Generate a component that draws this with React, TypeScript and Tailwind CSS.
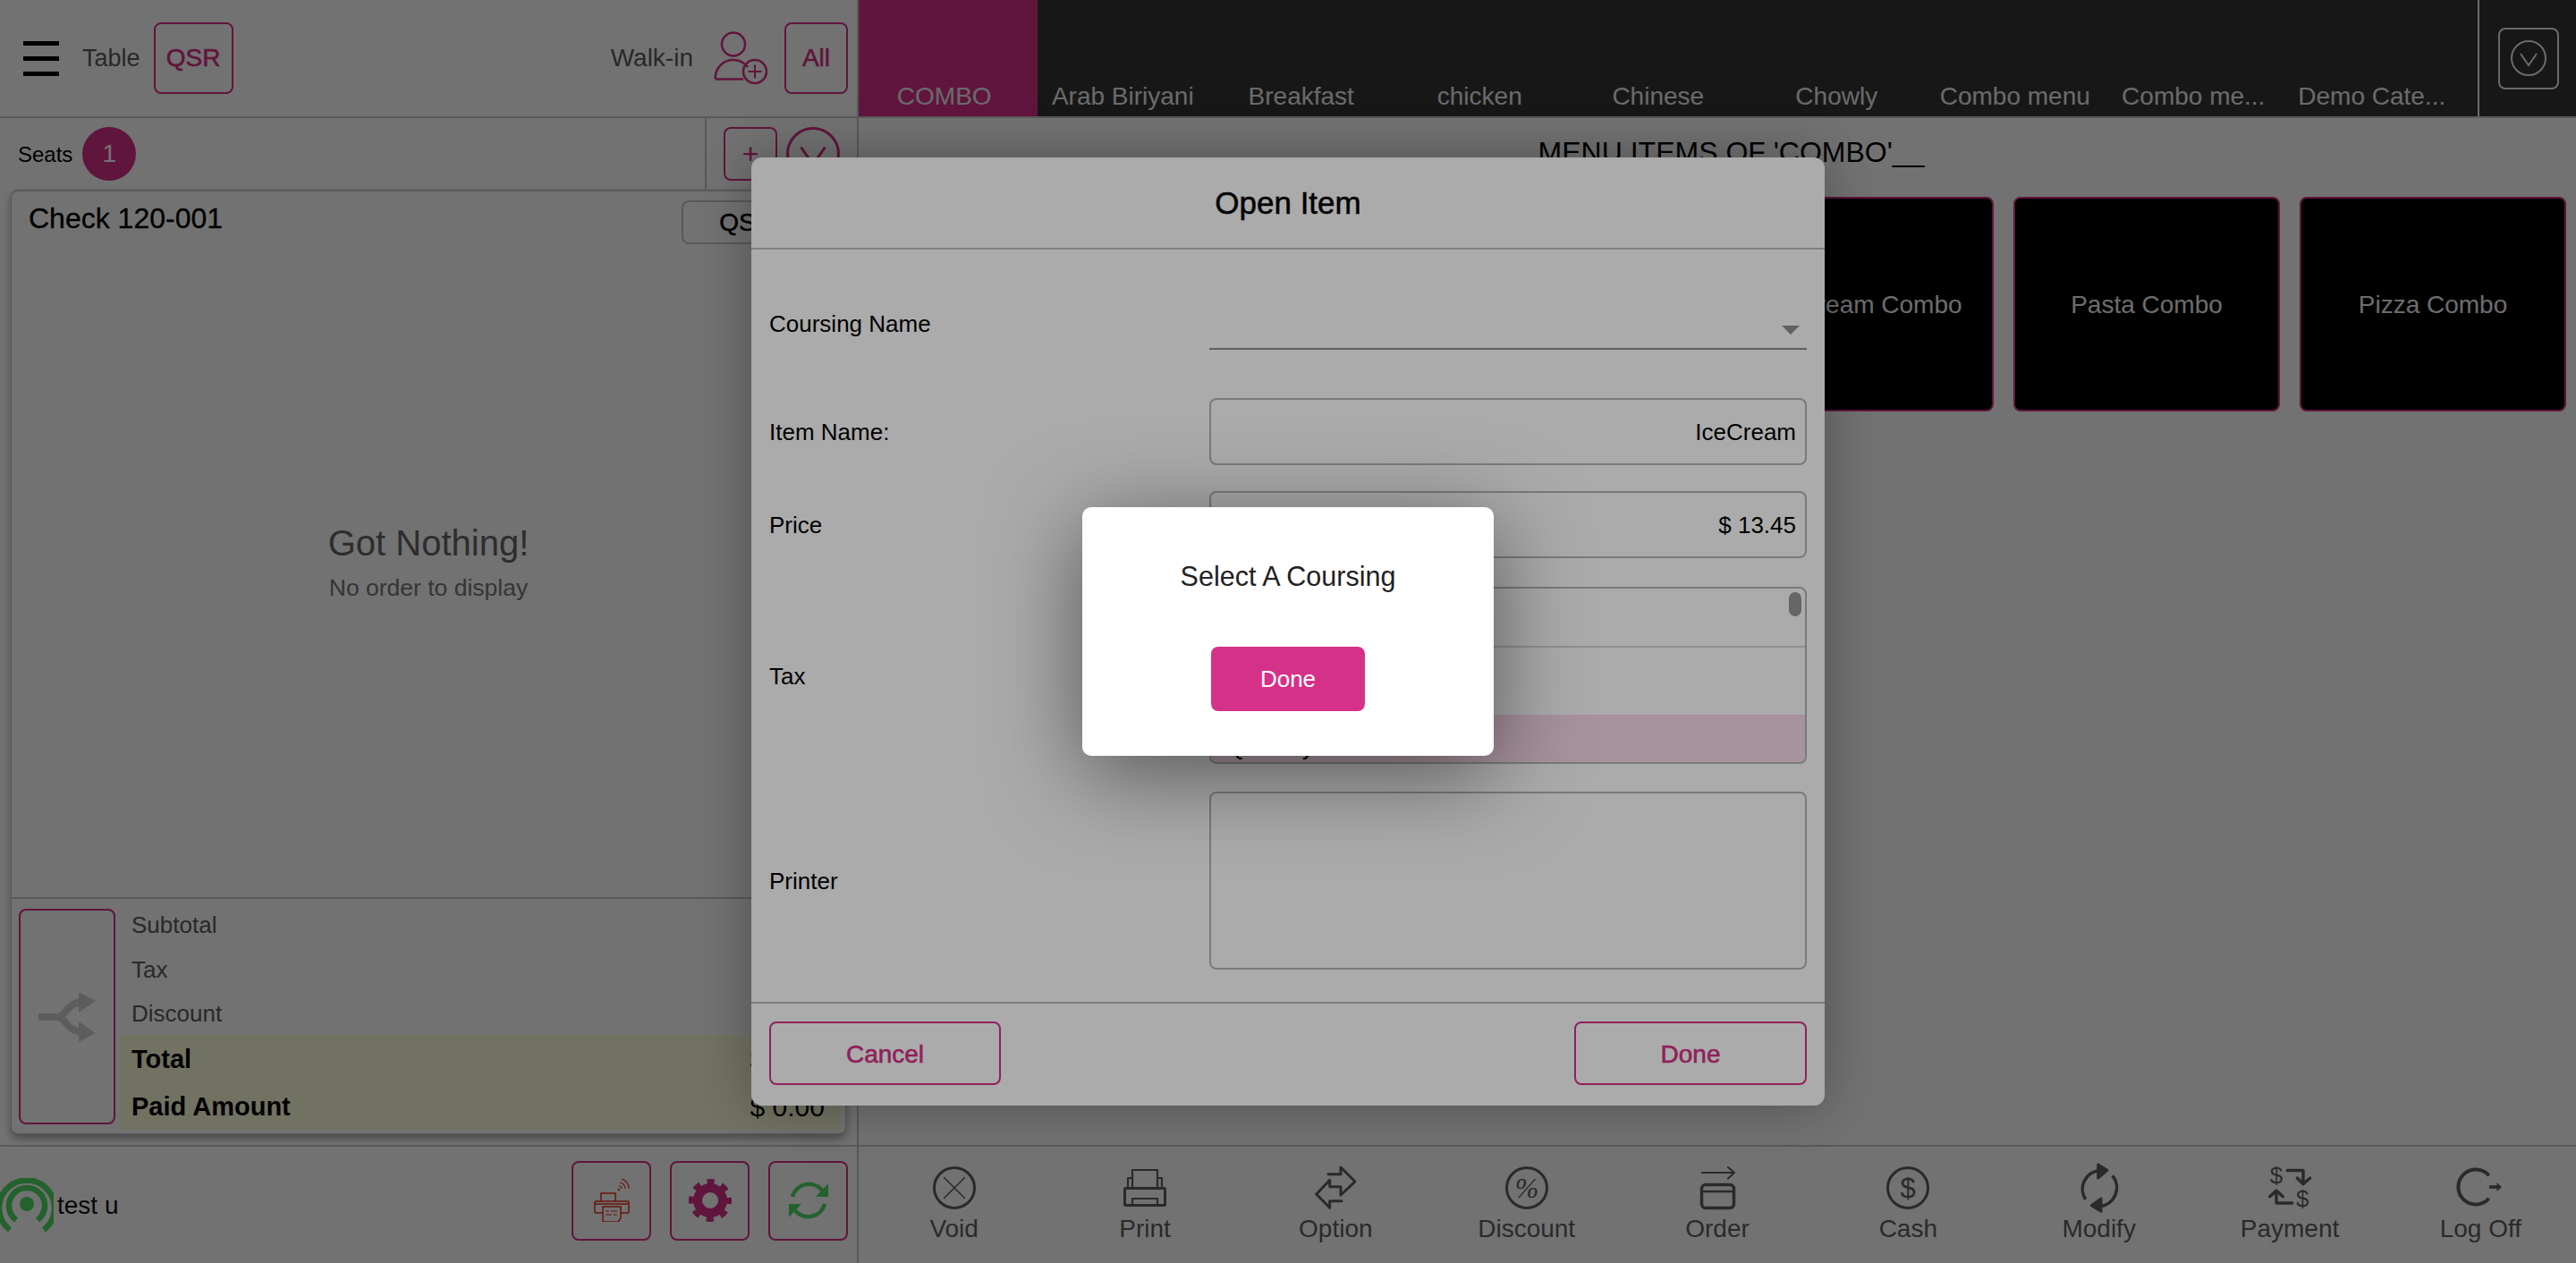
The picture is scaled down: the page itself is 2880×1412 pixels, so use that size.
import type { ReactNode } from "react";

const tabs = [
  "COMBO",
  "Arab Biriyani",
  "Breakfast",
  "chicken",
  "Chinese",
  "Chowly",
  "Combo menu",
  "Combo me...",
  "Demo Cate...",
];

const magenta = "#d63189";
const iconInk = "#5f5f5f";

function Icon({ children }: { children: ReactNode }) {
  return (
    <svg
      viewBox="0 0 52 52"
      className="h-[52px] w-[52px] overflow-visible"
      fill="none"
      stroke={iconInk}
      strokeWidth={3}
      strokeLinejoin="round"
      strokeLinecap="round"
    >
      {children}
    </svg>
  );
}

const actions: { label: string; icon: ReactNode }[] = [
  {
    label: "Void",
    icon: (
      <Icon>
        <circle cx="26" cy="26" r="22.5" />
        <path d="M14.5 14.5 37.5 37.5M37.5 14.5 14.5 37.5" strokeWidth={1.6} />
      </Icon>
    ),
  },
  {
    label: "Print",
    icon: (
      <Icon>
        <path d="M12 26V6h28v20M12 15H7v11M40 15h5v11" strokeWidth={2.2} />
        <rect x="3.5" y="26.5" width="45" height="19" rx="1" />
        <path d="M12 45v-7h28v7" strokeWidth={2.2} />
      </Icon>
    ),
  },
  {
    label: "Option",
    icon: (
      <Icon>
        <path d="M18 10.7H32V3L48 19L32 34V24.7H19.7V17.3L4.7 33L19.7 48.3V40.7H33" />
      </Icon>
    ),
  },
  {
    label: "Discount",
    icon: (
      <Icon>
        <circle cx="26" cy="26" r="22.5" />
        <text
          x="26"
          y="37"
          textAnchor="middle"
          fontSize="32"
          fontStyle="italic"
          fontFamily="'Liberation Serif', serif"
          fill={iconInk}
          stroke="none"
        >
          %
        </text>
      </Icon>
    ),
  },
  {
    label: "Order",
    icon: (
      <Icon>
        <path d="M8.7 9H45M38 3l7 6-7 6.5" strokeWidth={2.2} />
        <rect x="8.5" y="22.5" width="36" height="26" rx="4.5" strokeWidth={3.5} />
        <path d="M8.5 30H44.5" strokeWidth={2.6} />
      </Icon>
    ),
  },
  {
    label: "Cash",
    icon: (
      <Icon>
        <circle cx="26" cy="26" r="22.5" />
        <text
          x="26"
          y="37"
          textAnchor="middle"
          fontSize="31"
          fontFamily="'Liberation Sans', sans-serif"
          fill={iconInk}
          stroke="none"
        >
          $
        </text>
      </Icon>
    ),
  },
  {
    label: "Modify",
    icon: (
      <Icon>
        <path d="M10.7 39A21 21 0 0 1 27 6.5" strokeLinecap="butt" strokeWidth={3.5} />
        <path d="M40.7 12.3A21 21 0 0 1 26 46.7" strokeLinecap="butt" strokeWidth={3.5} />
        <path d="M35 6.3 24.7 0V15Z" fill={iconInk} />
        <path d="M17.3 45.7 28 38V52.3Z" fill={iconInk} />
      </Icon>
    ),
  },
  {
    label: "Payment",
    icon: (
      <Icon>
        <path d="M23.3 6.5H41V20M34.3 15 41 21.7 48.7 15" strokeWidth={3.4} />
        <path d="M28.7 43H11V30M3.7 35.7 11 29 18.3 35.7" strokeWidth={3.4} />
        <text
          x="11"
          y="21"
          textAnchor="middle"
          fontSize="26"
          fontFamily="'Liberation Sans', sans-serif"
          fill={iconInk}
          stroke="none"
        >
          $
        </text>
        <text
          x="40.3"
          y="47"
          textAnchor="middle"
          fontSize="26"
          fontFamily="'Liberation Sans', sans-serif"
          fill={iconInk}
          stroke="none"
        >
          $
        </text>
      </Icon>
    ),
  },
  {
    label: "Log Off",
    icon: (
      <Icon>
        <path d="M35.7 12.3A19.5 19.5 0 1 0 35.7 37.7" strokeWidth={4} strokeLinecap="butt" />
        <path d="M36 25H45" strokeWidth={3.6} strokeLinecap="butt" />
        <path d="M44.5 20 50 25 44.5 30Z" fill={iconInk} stroke="none" />
      </Icon>
    ),
  },
];

function OutlineButton({ children, className }: { children: ReactNode; className: string }) {
  return (
    <button
      type="button"
      className={`flex flex-none items-center justify-center rounded-lg border-2 border-[#d63189] ${className}`}
    >
      {children}
    </button>
  );
}

function Chevron({ color, size }: { color: string; size: number }) {
  return (
    <svg viewBox="0 0 40 40" width={size} height={size} fill="none" stroke={color} strokeWidth={2}>
      <circle cx="20" cy="20" r="19" />
      <path d="M11 15 20 28 29 15" />
    </svg>
  );
}

function SummaryRow({
  label,
  value,
  strong,
  className,
}: {
  label: string;
  value?: string;
  strong?: boolean;
  className: string;
}) {
  return (
    <div className={`flex items-center justify-between pl-[13px] pr-[18px] pt-[2px] ${className}`}>
      <span className={strong ? "text-[29px] font-bold text-black" : "text-[26px] text-[#5c5c5c]"}>{label}</span>
      {value ? <span className="text-[30px] text-black">{value}</span> : null}
    </div>
  );
}

function FormRow({ label, children, className }: { label: string; children: ReactNode; className: string }) {
  return (
    <div className={`flex items-center px-[20px] ${className}`}>
      <span className="w-[492px] flex-none pt-[2px] text-[26px] text-black">{label}</span>
      <div className="min-w-0 flex-1">{children}</div>
    </div>
  );
}

export default function App() {
  return (
    <div className="relative flex h-screen w-screen overflow-hidden bg-white font-['Liberation_Sans',sans-serif]">
      {/* left: check panel */}
      <div className="flex w-[960px] flex-none flex-col border-r-2 border-[#c6c6c6]">
        <div className="flex h-[132px] flex-none items-center border-b-2 border-[#c6c6c6] pr-[10px]">
          <div className="ml-[26px] flex w-[40px] flex-col gap-[12px]">
            <div className="h-[5px] bg-black" />
            <div className="h-[5px] bg-black" />
            <div className="h-[5px] bg-black" />
          </div>
          <span className="ml-[26px] text-[27px] text-[#5c5c5c]">Table</span>
          <OutlineButton className="ml-[15px] h-[80px] w-[89px] text-[28px] text-[#d63189] [-webkit-text-stroke:0.6px_#d63189]">
            QSR
          </OutlineButton>
          <span className="ml-auto text-[28px] text-[#5c5c5c]">Walk-in</span>
          <svg viewBox="0 0 60 60" className="ml-[23px] h-[60px] w-[60px]" fill="none" stroke={magenta} strokeWidth={2.6}>
            <circle cx="22" cy="14.5" r="13" />
            <path d="M1.5 53C2 40 11 32 22 32C28 32 34 35 38 40M1.5 53.5H33" />
            <circle cx="46" cy="45" r="13" />
            <path d="M46 37.5V52.5M38.5 45H53.5" strokeWidth={2} />
          </svg>
          <OutlineButton className="ml-[19px] h-[80px] w-[71px] text-[28px] text-[#d63189] [-webkit-text-stroke:0.6px_#d63189]">
            All
          </OutlineButton>
        </div>

        <div className="flex h-[80px] flex-none items-center">
          <span className="ml-[20px] pt-[2px] text-[24px] text-black">Seats</span>
          <div className="ml-[11px] flex h-[60px] w-[60px] items-center justify-center rounded-full bg-[#d63189] text-[28px] text-white">
            1
          </div>
          <div className="ml-auto flex h-full items-center border-l-2 border-[#c6c6c6] pl-[19px] pr-[19px]">
            <OutlineButton className="h-[60px] w-[60px] text-[32px] text-[#d63189]">+</OutlineButton>
            <div className="ml-[10px]">
              <Chevron color={magenta} size={60} />
            </div>
          </div>
        </div>

        <div className="mx-[12px] flex h-[1056px] flex-none flex-col rounded-lg border border-t-2 border-[#c6c6c6] bg-white shadow-[0_5px_10px_rgba(0,0,0,0.35)]">
          <div className="flex flex-1 flex-col">
            <div className="flex h-[61px] flex-none items-start pr-[38px]">
              <span className="ml-[19px] mt-[10px] text-[32px] leading-[40px] text-black [-webkit-text-stroke:0.3px_black]">
                Check 120-001
              </span>
              <div className="ml-auto mt-[10px] flex h-[49px] w-[145px] items-center justify-center rounded-lg border-2 border-[#c6c6c6] text-[28px] text-black [-webkit-text-stroke:0.5px_black]">
                QSR
              </div>
            </div>
            <div className="flex flex-1 flex-col items-center justify-center pb-[15px]">
              <div className="text-[40px] leading-[50px] text-[#666]">Got Nothing!</div>
              <div className="text-[26.5px] leading-[50px] text-[#777]">No order to display</div>
            </div>
          </div>

          <div className="flex h-[264px] flex-none border-t-2 border-[#c6c6c6]">
            <OutlineButton className="ml-[8px] mt-[11px] h-[241px] w-[108px]">
              <svg viewBox="0 0 64 54" className="h-[54px] w-[64px]" fill="none" stroke="#d0d0d0" strokeWidth={8}>
                <path d="M0 27H22C30 27 32 10 50 10M22 27C30 27 32 44 50 44" />
                <path d="M45 -1 64 9 45 22ZM45 55 64 45 45 32Z" fill="#d0d0d0" stroke="none" />
              </svg>
            </OutlineButton>
            <div className="ml-[5px] flex w-[806px] flex-none flex-col pt-[3px]">
              <SummaryRow label="Subtotal" className="h-[50px]" />
              <SummaryRow label="Tax" className="h-[50px]" />
              <SummaryRow label="Discount" className="h-[49px]" />
              <div className="bg-[#ffffdc]">
                <SummaryRow label="Total" value="$ 0.00" strong className="h-[53px]" />
                <SummaryRow label="Paid Amount" value="$ 0.00" strong className="h-[53px]" />
              </div>
            </div>
          </div>
        </div>

        <div className="mt-[12px] flex flex-1 items-center border-t-2 border-[#c6c6c6] pr-[10px]">
          <svg viewBox="0 0 60 60" className="h-[60px] w-[60px] flex-none" fill="none" stroke="#4fd865" strokeWidth={6.5}>
            <circle cx="30" cy="29" r="8" fill="#4fd865" stroke="none" />
            <path d="M18 47A20 20 0 1 1 42 47" />
            <path d="M11 58A31 31 0 1 1 49 58" />
          </svg>
          <span className="ml-[4px] pt-[2px] text-[28px] text-[#111]">test u</span>
          <OutlineButton className="mb-[10px] ml-auto h-[89px] w-[89px]">
            <svg viewBox="0 0 40 48" className="h-[48px] w-[40px]" fill="none" stroke="#e03018" strokeWidth={1.5}>
              <path d="M28 8A3 3 0 0 1 31 11M29 4A7 7 0 0 1 35 11M31 0A11 11 0 0 1 39 11" strokeWidth={1.1} />
              <circle cx="28" cy="12" r="1.2" fill="#e03018" stroke="none" />
              <path d="M8 25V16H24V25" />
              <rect x="1" y="25" width="38" height="13" rx="1" />
              <path d="M1 28H39" />
              <path d="M10 31V48H27L30 44V31Z" fill="white" />
              <path d="M13 36H17M19 36H26M13 40H20M22 40H26" strokeWidth={1.2} />
            </svg>
          </OutlineButton>
          <OutlineButton className="mb-[10px] ml-[21px] h-[89px] w-[89px]">
            <svg viewBox="0 0 48 48" className="h-[48px] w-[48px]" fill="none" stroke={magenta}>
              <circle cx="24" cy="24" r="14" strokeWidth={10} />
              <circle cx="24" cy="24" r="20.5" strokeWidth={7} strokeDasharray="8.05 8.05" strokeDashoffset="4" />
            </svg>
          </OutlineButton>
          <OutlineButton className="mb-[10px] ml-[21px] h-[89px] w-[89px]">
            <svg viewBox="0 0 48 48" className="h-[48px] w-[48px]" fill="none" stroke="#4fd865" strokeWidth={4.5}>
              <path d="M6 20A19 19 0 0 1 40 14" />
              <path d="M42 28A19 19 0 0 1 8 34" />
              <path d="M46 5V20H32ZM2 43V28H16Z" fill="#4fd865" stroke="none" />
            </svg>
          </OutlineButton>
        </div>
      </div>

      {/* right: categories, menu items, actions */}
      <div className="flex min-w-0 flex-1 flex-col">
        <div className="flex h-[132px] flex-none border-b-2 border-[#c6c6c6] bg-[#353535]">
          {tabs.map((tab, i) => (
            <div
              key={tab}
              className={`flex w-[199.5px] flex-none items-end justify-center pb-[6px] pr-[8px] text-[28px] leading-[32px] text-[#eee] ${
                i === 0 ? "bg-[#d63189]" : ""
              }`}
            >
              {tab}
            </div>
          ))}
          <div className="ml-auto flex w-[110px] flex-none items-center border-l-2 border-[#eee] pl-[21px]">
            <div className="flex h-[69px] w-[68px] items-center justify-center rounded-lg border-2 border-[#eee]">
              <Chevron color="#eee" size={40} />
            </div>
          </div>
        </div>

        <div className="flex-1 pr-[11px]">
          <div className="pl-[42px] pt-[18px] text-center text-[32px] leading-[40px] text-black">
            MENU ITEMS OF 'COMBO'__
          </div>
          <div className="mt-[30px] flex justify-end gap-[22px]">
            {["Ice Cream Combo", "Pasta Combo", "Pizza Combo"].map((name) => (
              <div
                key={name}
                className="flex h-[240px] w-[298px] items-center justify-center rounded-lg border-2 border-[#d63189] bg-black pt-[2px] text-[28px] text-[#f2f2f2]"
              >
                {name}
              </div>
            ))}
          </div>
        </div>

        <div className="grid h-[132px] flex-none grid-cols-9 border-t-2 border-[#c6c6c6]">
          {actions.map((a) => (
            <div key={a.label} className="flex flex-col items-center pt-[20px]">
              {a.icon}
              <span className="mt-[3px] text-[28px] leading-[34px] text-[#5f5f5f]">{a.label}</span>
            </div>
          ))}
        </div>
      </div>

      {/* open item dialog */}
      <div className="absolute inset-0 flex items-center justify-center bg-black/33">
        <div className="flex h-[1060px] w-[1200px] flex-col rounded-xl bg-white shadow-[0_0_60px_rgba(0,0,0,0.3)]">
          <div className="flex h-[103px] flex-none items-center justify-center border-b-2 border-[#bfbfbf] pt-[2px] text-[35px] text-black [-webkit-text-stroke:0.5px_black]">
            Open Item
          </div>
          <FormRow label="Coursing Name" className="mt-[52px] h-[60px]">
            <div className="relative h-[60px] border-b-2 border-[#8f8f8f]">
              <div className="absolute right-[8px] top-[33px] h-0 w-0 border-x-[10px] border-t-[10px] border-x-transparent border-t-[#8f8f8f]" />
            </div>
          </FormRow>
          <FormRow label="Item Name:" className="mt-[54px] h-[75px]">
            <div className="flex h-[75px] items-center justify-end rounded-lg border-2 border-[#b6b6b6] pr-[10px] pt-[2px] text-[26px] text-black">
              IceCream
            </div>
          </FormRow>
          <FormRow label="Price" className="mt-[29px] h-[75px]">
            <div className="flex h-[75px] items-center justify-end rounded-lg border-2 border-[#b6b6b6] pr-[10px] pt-[2px] text-[26px] text-black">
              $ 13.45
            </div>
          </FormRow>
          <FormRow label="Tax" className="mt-[32px] h-[198px]">
            <div className="relative flex h-[198px] flex-col overflow-hidden rounded-lg border-2 border-[#b6b6b6]">
              <div className="h-[66px] flex-none border-b-2 border-[#d6d6d6]" />
              <div className="h-[75px] flex-none" />
              <div className="flex flex-1 items-end bg-[#f9daec] pb-[2px] pl-[18px] text-[26px] leading-[30px] text-black">
                Quantity
              </div>
              <div className="absolute right-[4px] top-[4px] h-[27px] w-[14px] rounded-full bg-[#989898]" />
            </div>
          </FormRow>
          <FormRow label="Printer" className="mt-[31px] h-[199px]">
            <div className="h-[199px] rounded-lg border-2 border-[#b6b6b6]" />
          </FormRow>
          <div className="mt-[36px] flex flex-1 items-start justify-between border-t-2 border-[#bfbfbf] px-[20px] pt-[20px]">
            <OutlineButton className="h-[71px] w-[259px] pt-[3px] text-[28px] text-[#d63189] [-webkit-text-stroke:0.6px_#d63189]">
              Cancel
            </OutlineButton>
            <OutlineButton className="h-[71px] w-[260px] pt-[3px] text-[28px] text-[#d63189] [-webkit-text-stroke:0.6px_#d63189]">
              Done
            </OutlineButton>
          </div>
        </div>
      </div>

      {/* alert on top of the dialog */}
      <div className="absolute inset-0 flex items-center justify-center bg-black/33">
        <div className="flex h-[278px] w-[460px] flex-col items-center rounded-[10px] bg-white pt-[57px] shadow-[0_20px_100px_rgba(0,0,0,0.5)]">
          <div className="text-[30.5px] leading-[40px] text-[#222]">Select A Coursing</div>
          <button
            type="button"
            className="mt-[59px] flex h-[72px] w-[172px] items-center justify-center rounded-lg bg-[#d63189] text-[26px] text-white"
          >
            Done
          </button>
        </div>
      </div>
    </div>
  );
}
